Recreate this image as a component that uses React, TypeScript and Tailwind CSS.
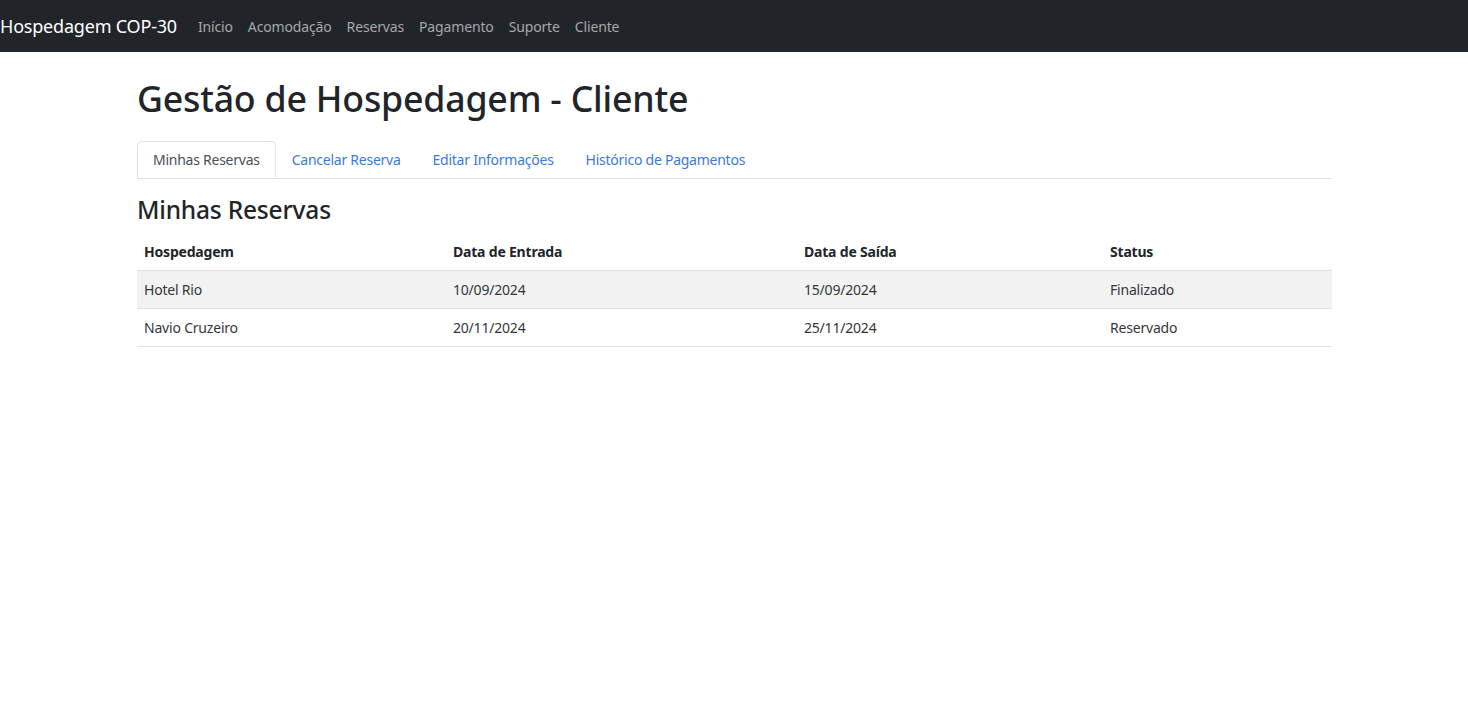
const NAV_LINKS = ["Início", "Acomodação", "Reservas", "Pagamento", "Suporte", "Cliente"];
const TABS = ["Minhas Reservas", "Cancelar Reserva", "Editar Informações", "Histórico de Pagamentos"];

const RESERVAS = [
	{ hospedagem: "Hotel Rio", entrada: "10/09/2024", saida: "15/09/2024", status: "Finalizado" },
	{ hospedagem: "Navio Cruzeiro", entrada: "20/11/2024", saida: "25/11/2024", status: "Reservado" },
];

const App = () => {
	return (
		<div className="min-h-[722px] bg-white text-[#212529] font-['Noto_Sans',_'Open_Sans',_sans-serif]">
			{/* navbar */}
			<nav className="flex h-[52px] items-center bg-[#212529]">
				<span className="mr-[21px] text-[18px] leading-none text-white tracking-[-0.2px]">Hospedagem COP-30</span>
				<ul className="flex items-center gap-[15px]">
					{NAV_LINKS.map(link => (
						<li key={link} className="text-[14px] text-[#a5a7aa] tracking-[-0.15px]">
							{link}
						</li>
					))}
				</ul>
			</nav>

			<div className="ml-[137px] w-[1195px]">
				<h1 className="mt-[23px] text-[35.7px] font-medium leading-[46px] tracking-[-0.2px]">
					Gestão de Hospedagem - Cliente
				</h1>

				{/* tabs */}
				<div className="mt-[20px] flex border-b border-[#dee2e6]">
					{TABS.map((tab, index) => (
						<div
							key={tab}
							className={
								index === 0
									? "-mb-px flex h-[37px] items-center rounded-t-[5px] border border-[#dee2e6] border-b-white bg-white px-[15px] text-[14px] tracking-[-0.25px] text-[#495057]"
									: "flex h-[37px] items-center border border-transparent px-[15px] text-[14px] tracking-[-0.25px] text-[#3a7bd5]"
							}
						>
							{tab}
						</div>
					))}
				</div>

				<h3 className="mt-[15px] text-[24.5px] font-medium leading-[32px] tracking-[-0.2px]">Minhas Reservas</h3>

				<table className="mt-[7px] w-full border-collapse text-[14px] tracking-[-0.2px]">
					<thead>
						<tr className="h-[37px] border-b border-[#dee2e6]">
							<th className="w-[309px] px-[7px] text-left font-bold">Hospedagem</th>
							<th className="w-[351px] px-[7px] text-left font-bold">Data de Entrada</th>
							<th className="w-[306px] px-[7px] text-left font-bold">Data de Saída</th>
							<th className="px-[7px] text-left font-bold">Status</th>
						</tr>
					</thead>
					<tbody>
						{RESERVAS.map((r, index) => (
							<tr
								key={r.hospedagem}
								className={
									index % 2 === 0
										? "h-[38px] border-b border-[#dee2e6] bg-[#f2f2f2] text-[#33373b]"
										: "h-[38px] border-b border-[#dee2e6] text-[#33373b]"
								}
							>
								<td className="px-[7px]">{r.hospedagem}</td>
								<td className="px-[7px]">{r.entrada}</td>
								<td className="px-[7px]">{r.saida}</td>
								<td className="px-[7px]">{r.status}</td>
							</tr>
						))}
					</tbody>
				</table>
			</div>
		</div>
	);
};

export default App;
